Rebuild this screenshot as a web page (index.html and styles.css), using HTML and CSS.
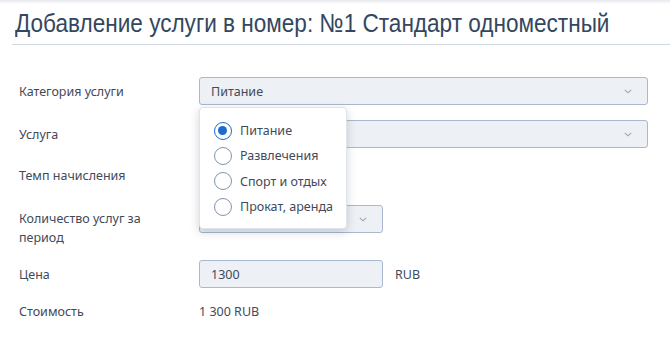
FILE: index.html
```html
<!DOCTYPE html>
<html lang="ru">
<head>
<meta charset="utf-8">
<link rel="stylesheet" href="styles.css">
</head>
<body>
<div class="topshade"></div>
<div class="page">
  <div class="head"><h1 class="title">Добавление услуги в номер: №1 Стандарт одноместный</h1></div>
  <div class="form">
    <div class="row r1">
      <div class="label">Категория услуги</div>
      <div class="field">
        <div class="select wide">
          <span>Питание</span>
          <svg class="chev" width="8" height="5" viewBox="0 0 8 5"><path d="M0.8 0.8 L4 3.8 L7.2 0.8" fill="none" stroke="#97a6bb" stroke-width="1.1"/></svg>
        </div>
        <div class="menu">
          <div class="opt"><span class="radio on"></span>Питание</div>
          <div class="opt"><span class="radio"></span>Развлечения</div>
          <div class="opt"><span class="radio"></span>Спорт и отдых</div>
          <div class="opt"><span class="radio"></span>Прокат, аренда</div>
        </div>
      </div>
    </div>
    <div class="row r2">
      <div class="label">Услуга</div>
      <div class="field">
        <div class="select wide">
          <span></span>
          <svg class="chev" width="8" height="5" viewBox="0 0 8 5"><path d="M0.8 0.8 L4 3.8 L7.2 0.8" fill="none" stroke="#97a6bb" stroke-width="1.1"/></svg>
        </div>
      </div>
    </div>
    <div class="row r3">
      <div class="label">Темп начисления</div>
      <div class="field"></div>
    </div>
    <div class="row r4">
      <div class="label">Количество услуг за период</div>
      <div class="field">
        <div class="select short">
          <span></span>
          <svg class="chev" width="8" height="5" viewBox="0 0 8 5"><path d="M0.8 0.8 L4 3.8 L7.2 0.8" fill="none" stroke="#97a6bb" stroke-width="1.1"/></svg>
        </div>
      </div>
    </div>
    <div class="row r5">
      <div class="label">Цена</div>
      <div class="field inline">
        <div class="input short">1300</div>
        <span class="unit">RUB</span>
      </div>
    </div>
    <div class="row r6">
      <div class="label">Стоимость</div>
      <div class="field"><span class="value">1 300 RUB</span></div>
    </div>
  </div>
</div>
</body>
</html>
```
FILE: styles.css
```css
* { box-sizing: border-box; }
html, body { margin: 0; padding: 0; background: #fff; }
body {
  font-family: "Noto Sans", "Open Sans", sans-serif;
  font-size: 12.5px;
  color: #3f4a5a;
  width: 670px;
  height: 347px;
  overflow: hidden;
  position: relative;
}
.topshade {
  height: 4px;
  background: linear-gradient(#e6e9ee, #ffffff);
}
.page {
  padding: 0 0 0 12px;
}
.head {
  height: 41px;
  padding: 4px 0 0 3px;
  border-bottom: 1px solid #cfd8e2;
}
.title {
  margin: 0;
  font-family: "Liberation Sans", Arial, sans-serif;
  font-weight: normal;
  font-size: 26px;
  line-height: 30px;
  color: #344760;
  white-space: nowrap;
  transform: scaleX(0.868);
  transform-origin: 0 50%;
}
.form {
  padding: 32px 0 0 7px;
}
.row {
  display: flex;
  align-items: center;
}
.label {
  width: 180px;
  padding-right: 20px;
  line-height: 19px;
}
.field {
  position: relative;
  flex: 1;
}
.r1 { height: 28px; }
.r2 { height: 28px; margin-top: 15px; }
.r3 { height: 28px; margin-top: 13px; }
.r4 { height: 38px; margin-top: 20px; align-items: flex-start; }
.r5 { height: 28px; margin-top: 13px; }
.r6 { height: 20px; margin-top: 13px; }
.select, .input {
  height: 28px;
  background: #edf1f5;
  border: 1px solid #a9b8cc;
  border-radius: 3px;
  display: flex;
  align-items: center;
  justify-content: space-between;
  padding: 0 15px 0 11px;
  color: #3f4a5a;
}
.wide { width: 449px; }
.short { width: 184px; }
.r4 .select { margin-top: -4px; }
.chev { display: block; }
.inline { display: flex; align-items: center; }
.unit { margin-left: 12px; }
.menu {
  position: absolute;
  left: 0;
  top: 30px;
  width: 148px;
  background: #fff;
  border: 1px solid #dfe4ea;
  border-radius: 4px;
  box-shadow: 0 3px 10px rgba(40, 55, 80, 0.22);
  padding: 10px 0 9px 14px;
  z-index: 5;
}
.opt {
  display: flex;
  align-items: center;
  height: 25.3px;
  white-space: nowrap;
}
.radio {
  width: 18px;
  height: 18px;
  border: 1.4px solid #8394ad;
  border-radius: 50%;
  margin-right: 8px;
  flex: none;
  position: relative;
}
.radio.on {
  border-color: #1d6bd0;
}
.radio.on::after {
  content: "";
  position: absolute;
  left: 3.1px;
  top: 3.1px;
  width: 9px;
  height: 9px;
  border-radius: 50%;
  background: #1d6bd0;
}
```
